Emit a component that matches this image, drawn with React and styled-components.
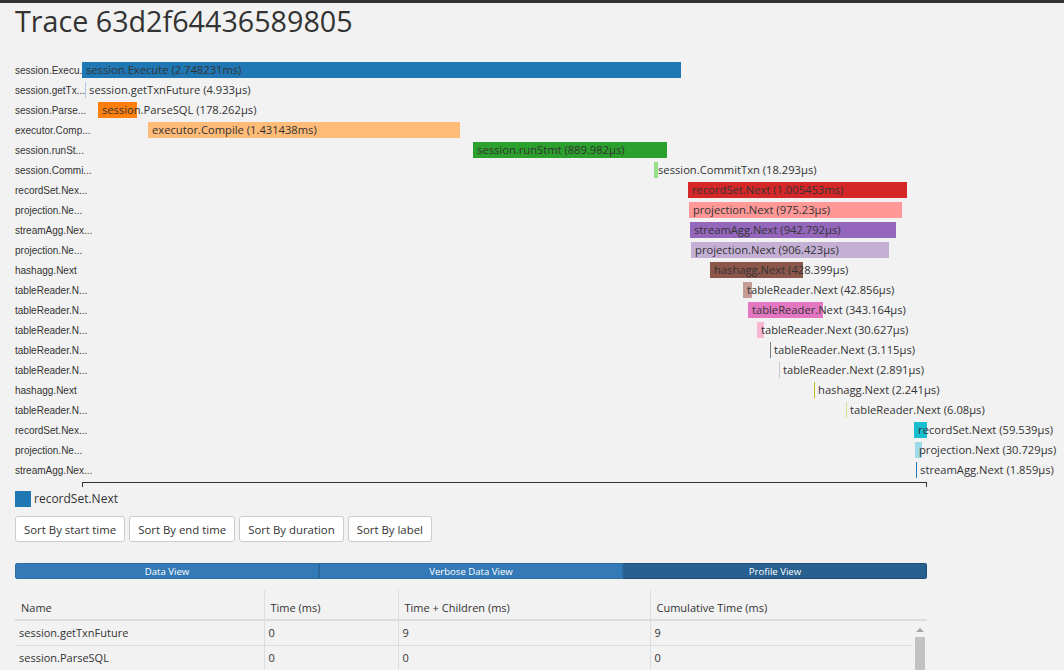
import React from "react";
import styled, { createGlobalStyle } from "styled-components";

const GlobalStyle = createGlobalStyle`
  html, body {
    margin: 0;
    padding: 0;
    overflow: hidden;
    background: #f2f2f2;
    font-family: "Open Sans", "Noto Sans", sans-serif;
    color: #333;
  }
`;

// px per microsecond on the timeline
const SCALE = 0.218;
const ORIGIN = 67;

const spans = [
  { label: "session.Execu...", name: "session.Execute", text: "2.748231ms", start: 0, dur: 2748.231, color: "#1f77b4" },
  { label: "session.getTx...", name: "session.getTxnFuture", text: "4.933µs", start: 14, dur: 4.933, color: "#aec7e8" },
  { label: "session.Parse...", name: "session.ParseSQL", text: "178.262µs", start: 73, dur: 178.262, color: "#ff7f0e" },
  { label: "executor.Comp...", name: "executor.Compile", text: "1.431438ms", start: 303, dur: 1431.438, color: "#ffbb78" },
  { label: "session.runSt...", name: "session.runStmt", text: "889.982µs", start: 1794, dur: 889.982, color: "#2ca02c" },
  { label: "session.Commi...", name: "session.CommitTxn", text: "18.293µs", start: 2624, dur: 18.293, color: "#98df8a" },
  { label: "recordSet.Nex...", name: "recordSet.Next", text: "1.005453ms", start: 2780, dur: 1005.453, color: "#d62728" },
  { label: "projection.Ne...", name: "projection.Next", text: "975.23µs", start: 2784, dur: 975.23, color: "#ff9896" },
  { label: "streamAgg.Nex...", name: "streamAgg.Next", text: "942.792µs", start: 2789, dur: 942.792, color: "#9467bd" },
  { label: "projection.Ne...", name: "projection.Next", text: "906.423µs", start: 2794, dur: 906.423, color: "#c5b0d5" },
  { label: "hashagg.Next", name: "hashagg.Next", text: "428.399µs", start: 2881, dur: 428.399, color: "#8c564b" },
  { label: "tableReader.N...", name: "tableReader.Next", text: "42.856µs", start: 3032, dur: 42.856, color: "#c49c94" },
  { label: "tableReader.N...", name: "tableReader.Next", text: "343.164µs", start: 3055, dur: 343.164, color: "#e377c2" },
  { label: "tableReader.N...", name: "tableReader.Next", text: "30.627µs", start: 3096, dur: 30.627, color: "#f7b6d2" },
  { label: "tableReader.N...", name: "tableReader.Next", text: "3.115µs", start: 3156, dur: 3.115, color: "#7f7f7f" },
  { label: "tableReader.N...", name: "tableReader.Next", text: "2.891µs", start: 3197, dur: 2.891, color: "#c7c7c7" },
  { label: "hashagg.Next", name: "hashagg.Next", text: "2.241µs", start: 3358, dur: 2.241, color: "#bcbd22" },
  { label: "tableReader.N...", name: "tableReader.Next", text: "6.08µs", start: 3505, dur: 6.08, color: "#dbdb8d" },
  { label: "recordSet.Nex...", name: "recordSet.Next", text: "59.539µs", start: 3817, dur: 59.539, color: "#17becf" },
  { label: "projection.Ne...", name: "projection.Next", text: "30.729µs", start: 3821, dur: 30.729, color: "#9edae5" },
  { label: "streamAgg.Nex...", name: "streamAgg.Next", text: "1.859µs", start: 3826, dur: 1.859, color: "#1f77b4" },
];

const rows = [
  ["session.getTxnFuture", "0", "9", "9"],
  ["session.ParseSQL", "0", "0", "0"],
  ["executor.Compile", "1", "1", "1"],
  ["session.runStmt", "0", "0", "0"],
  ["session.CommitTxn", "0", "0", "0"],
  ["recordSet.Next", "0", "1", "1"],
  ["projection.Next", "0", "0", "0"],
  ["streamAgg.Next", "0", "0", "0"],
];

const TopBar = styled.div`
  height: 3px;
  background: #333;
`;

const Page = styled.div`
  width: 912px;
  padding: 0 15px;
`;

const Title = styled.h1`
  margin: 0;
  font-size: 28.7px;
  font-weight: 400;
  line-height: 36px;
  color: #333;
`;

const Chart = styled.div`
  margin-top: 21px;
  display: flex;
  flex-direction: column;
`;

const Row = styled.div`
  display: flex;
  height: 20px;
  align-items: center;
`;

const RowLabel = styled.div`
  width: ${ORIGIN}px;
  flex: none;
  font-family: "Liberation Sans", Arial, sans-serif;
  font-size: 10px;
  color: #333;
  white-space: nowrap;
`;

const Track = styled.div`
  position: relative;
  width: 845px;
  height: 20px;
`;

const Bar = styled.div`
  position: absolute;
  top: 2px;
  height: 16px;
  background: ${(p) => p.$color};
`;

const BarText = styled.span`
  position: absolute;
  top: 0;
  line-height: 20px;
  font-size: 11.2px;
  color: #333;
  white-space: nowrap;
`;

const Axis = styled.div`
  margin: 2px 0 0 ${ORIGIN}px;
  width: 843px;
  height: 4px;
  border: 1px solid #333;
  border-bottom: none;
`;

const Legend = styled.div`
  display: flex;
  align-items: center;
  gap: 3px;
  margin-top: 3px;
  font-size: 12px;
`;

const Swatch = styled.span`
  width: 16px;
  height: 16px;
  background: ${(p) => p.$color};
`;

const Buttons = styled.div`
  display: flex;
  gap: 4px;
  margin-top: 9px;
`;

const Button = styled.button`
  height: 26px;
  padding: 0 8px;
  border: 1px solid #ccc;
  border-radius: 3px;
  background: #fff;
  font-family: "Open Sans", sans-serif;
  font-size: 11.4px;
  color: #333;
`;

const Tabs = styled.div`
  display: flex;
  margin-top: 21px;
  height: 16px;
  border-radius: 3px;
  overflow: hidden;
`;

const Tab = styled.div`
  flex: 1;
  display: flex;
  align-items: center;
  justify-content: center;
  font-size: 9.6px;
  color: #fff;
  background: ${(p) => (p.$active ? "#286090" : "#337ab7")};
  border: 1px solid ${(p) => (p.$active ? "#204d74" : "#2e6da4")};
  & + & {
    border-left-color: #2a6496;
  }
`;

const TableWrap = styled.div`
  margin-top: 11px;
  width: 912px;
`;

const Table = styled.table`
  width: ${(p) => p.$width}px;
  flex: none;
  table-layout: fixed;
  border-collapse: collapse;
  font-size: 11px;
  color: #333;
`;

const HeadCell = styled.th`
  height: 24px;
  padding: 5px 6px 0;
  text-align: left;
  font-weight: 400;
  border-left: 1px solid #ddd;
  border-bottom: 2px solid #ddd;
  &:first-child {
    border-left: none;
  }
`;

const Body = styled.div`
  display: flex;
  height: 200px;
  overflow: hidden;
`;

const Cell = styled.td`
  height: 22px;
  padding: 0 4px;
  border-left: 1px solid #ddd;
  border-bottom: 1px solid #ddd;
  &:first-child {
    border-left: none;
  }
`;

const ScrollBar = styled.div`
  width: 14px;
  display: flex;
  flex-direction: column;
  align-items: center;
`;

const ScrollArrow = styled.div`
  margin-top: 7px;
  width: 0;
  height: 0;
  border-left: 4px solid transparent;
  border-right: 4px solid transparent;
  border-bottom: 4px solid #a3a3a3;
`;

const ScrollThumb = styled.div`
  margin-top: 5px;
  width: 10px;
  height: 140px;
  background: #c1c1c1;
`;

const cols = [249, 134, 252];

const Cols = () => (
  <colgroup>
    {cols.map((w, i) => (
      <col key={i} style={{ width: w }} />
    ))}
    <col />
  </colgroup>
);

const App = () => {
  return (
    <>
      <GlobalStyle />
      <TopBar />
      <Page>
        <Title>Trace 63d2f64436589805</Title>
        <Chart>
          {spans.map((s, i) => {
            const left = s.start * SCALE;
            const width = Math.max(1, s.dur * SCALE);
            return (
              <Row key={i}>
                <RowLabel>{s.label}</RowLabel>
                <Track>
                  <Bar $color={s.color} style={{ left, width }} />
                  <BarText style={{ left: left + 4 }}>
                    {s.name} ({s.text})
                  </BarText>
                </Track>
              </Row>
            );
          })}
          <Axis />
        </Chart>
        <Legend>
          <Swatch $color="#1f77b4" />
          <span>recordSet.Next</span>
        </Legend>
        <Buttons>
          <Button>Sort By start time</Button>
          <Button>Sort By end time</Button>
          <Button>Sort By duration</Button>
          <Button>Sort By label</Button>
        </Buttons>
        <Tabs>
          <Tab>Data View</Tab>
          <Tab>Verbose Data View</Tab>
          <Tab $active>Profile View</Tab>
        </Tabs>
        <TableWrap>
          <Table $width={912}>
            <Cols />
            <thead>
              <tr>
                <HeadCell>Name</HeadCell>
                <HeadCell>Time (ms)</HeadCell>
                <HeadCell>Time + Children (ms)</HeadCell>
                <HeadCell>Cumulative Time (ms)</HeadCell>
              </tr>
            </thead>
          </Table>
          <Body>
            <Table $width={898}>
              <Cols />
              <tbody>
                {rows.map((r, i) => (
                  <tr key={i}>
                    {r.map((c, j) => (
                      <Cell key={j}>{c}</Cell>
                    ))}
                  </tr>
                ))}
              </tbody>
            </Table>
            <ScrollBar>
              <ScrollArrow />
              <ScrollThumb />
            </ScrollBar>
          </Body>
        </TableWrap>
      </Page>
    </>
  );
};

export default App;
